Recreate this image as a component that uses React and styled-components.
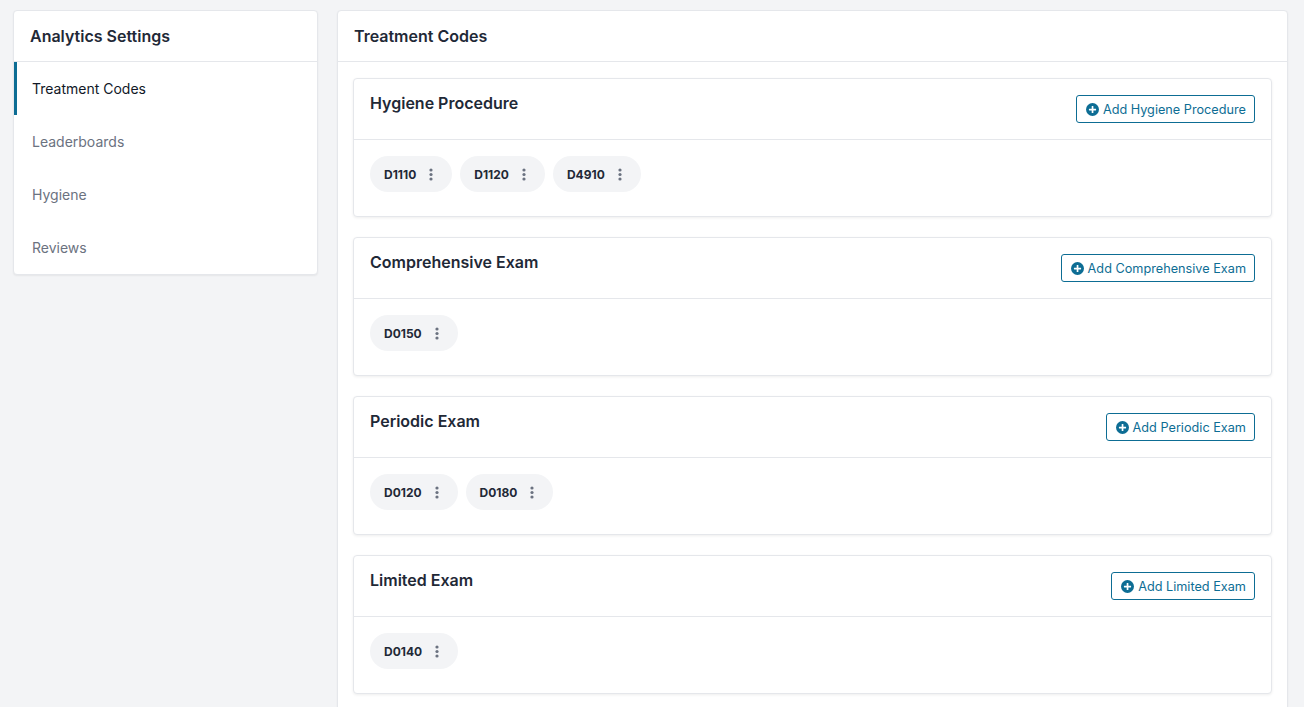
import React from 'react';
import styled, { createGlobalStyle } from 'styled-components';

const GlobalStyle = createGlobalStyle`
  html, body {
    margin: 0;
    padding: 0;
    background: #f3f4f6;
    font-family: Inter, "Noto Sans", "Liberation Sans", sans-serif;
    color: #1f2937;
    -webkit-font-smoothing: antialiased;
  }
  * { box-sizing: border-box; }
`;

const brand = '#0d6d94';

const Page = styled.div`
  display: grid;
  grid-template-columns: 305px 951px;
  gap: 19px;
  align-items: start;
  padding: 10px 16px 0 13px;
  min-height: 707px;
`;

const Card = styled.div`
  background: #fff;
  border: 1px solid #e5e7eb;
  border-radius: 4px;
  box-shadow: 0 1px 2px rgba(0, 0, 0, 0.06);
  overflow: hidden;
`;

const CardHeader = styled.div`
  display: flex;
  align-items: center;
  height: 51px;
  padding: 0 16px;
  border-bottom: 1px solid #e5e7eb;
  font-size: 16px;
  font-weight: 600;
  color: #1f2937;
`;

const NavList = styled.nav`
  display: flex;
  flex-direction: column;
`;

const NavItem = styled.a`
  display: flex;
  align-items: center;
  height: 53px;
  padding-left: 15px;
  font-size: 14px;
  text-decoration: none;
  border-left: 3px solid ${p => (p.$active ? brand : 'transparent')};
  color: ${p => (p.$active ? '#111827' : '#6b7280')};
  cursor: pointer;
`;

const Sections = styled.div`
  display: flex;
  flex-direction: column;
  gap: 20px;
  padding: 16px 15px 16px;
`;

const Section = styled.section`
  background: #fff;
  border: 1px solid #e5e7eb;
  border-radius: 4px;
  box-shadow: 0 1px 3px rgba(0, 0, 0, 0.07);
`;

const SectionHeader = styled.div`
  display: flex;
  justify-content: space-between;
  align-items: flex-start;
  padding: 13px 16px 16px;
  border-bottom: 1px solid #e5e7eb;
`;

const SectionTitle = styled.h3`
  margin: 0;
  font-size: 16px;
  line-height: 22px;
  font-weight: 600;
  color: #1f2937;
`;

const AddButton = styled.button`
  display: inline-flex;
  align-items: center;
  gap: 4px;
  height: 28px;
  margin-top: 3px;
  padding: 0 8px 0 9px;
  background: #fff;
  border: 1px solid ${brand};
  border-radius: 3px;
  color: ${brand};
  font-family: inherit;
  font-size: 12.7px;
  cursor: pointer;
`;

const ChipRow = styled.div`
  display: flex;
  flex-wrap: wrap;
  gap: 8px;
  padding: 16px 16px 24px;
`;

const Chip = styled.div`
  display: inline-flex;
  align-items: center;
  gap: 7px;
  height: 36px;
  padding: 0 13px 0 14px;
  border-radius: 18px;
  background: #f3f4f6;
  font-size: 12px;
  font-weight: 700;
  color: #1f2937;
`;

const Kebab = styled.span`
  display: inline-flex;
  align-items: center;
  justify-content: center;
  width: 16px;
  height: 16px;
  color: #6b7280;
`;

const PlusCircle = () => (
  <svg width="13" height="13" viewBox="0 0 16 16">
    <circle cx="8" cy="8" r="8" fill="currentColor" />
    <rect x="7" y="3.6" width="2.1" height="8.8" rx="0.4" fill="#fff" />
    <rect x="3.6" y="7" width="8.8" height="2.1" rx="0.4" fill="#fff" />
  </svg>
);

const DotsIcon = () => (
  <svg width="4" height="13" viewBox="0 0 4 13">
    <circle cx="2" cy="2" r="1.6" fill="currentColor" />
    <circle cx="2" cy="6.5" r="1.6" fill="currentColor" />
    <circle cx="2" cy="11" r="1.6" fill="currentColor" />
  </svg>
);

const navItems = ['Treatment Codes', 'Leaderboards', 'Hygiene', 'Reviews'];

const groups = [
  { title: 'Hygiene Procedure', codes: ['D1110', 'D1120', 'D4910'] },
  { title: 'Comprehensive Exam', codes: ['D0150'] },
  { title: 'Periodic Exam', codes: ['D0120', 'D0180'] },
  { title: 'Limited Exam', codes: ['D0140'] },
];

export default function App() {
  return (
    <>
      <GlobalStyle />
      <Page>
        <Card>
          <CardHeader>Analytics Settings</CardHeader>
          <NavList>
            {navItems.map((item, i) => (
              <NavItem key={item} $active={i === 0}>{item}</NavItem>
            ))}
          </NavList>
        </Card>

        <Card>
          <CardHeader>Treatment Codes</CardHeader>
          <Sections>
            {groups.map(group => (
              <Section key={group.title}>
                <SectionHeader>
                  <SectionTitle>{group.title}</SectionTitle>
                  <AddButton>
                    <PlusCircle />
                    Add {group.title}
                  </AddButton>
                </SectionHeader>
                <ChipRow>
                  {group.codes.map(code => (
                    <Chip key={code}>
                      {code}
                      <Kebab><DotsIcon /></Kebab>
                    </Chip>
                  ))}
                </ChipRow>
              </Section>
            ))}
          </Sections>
        </Card>
      </Page>
    </>
  );
}
